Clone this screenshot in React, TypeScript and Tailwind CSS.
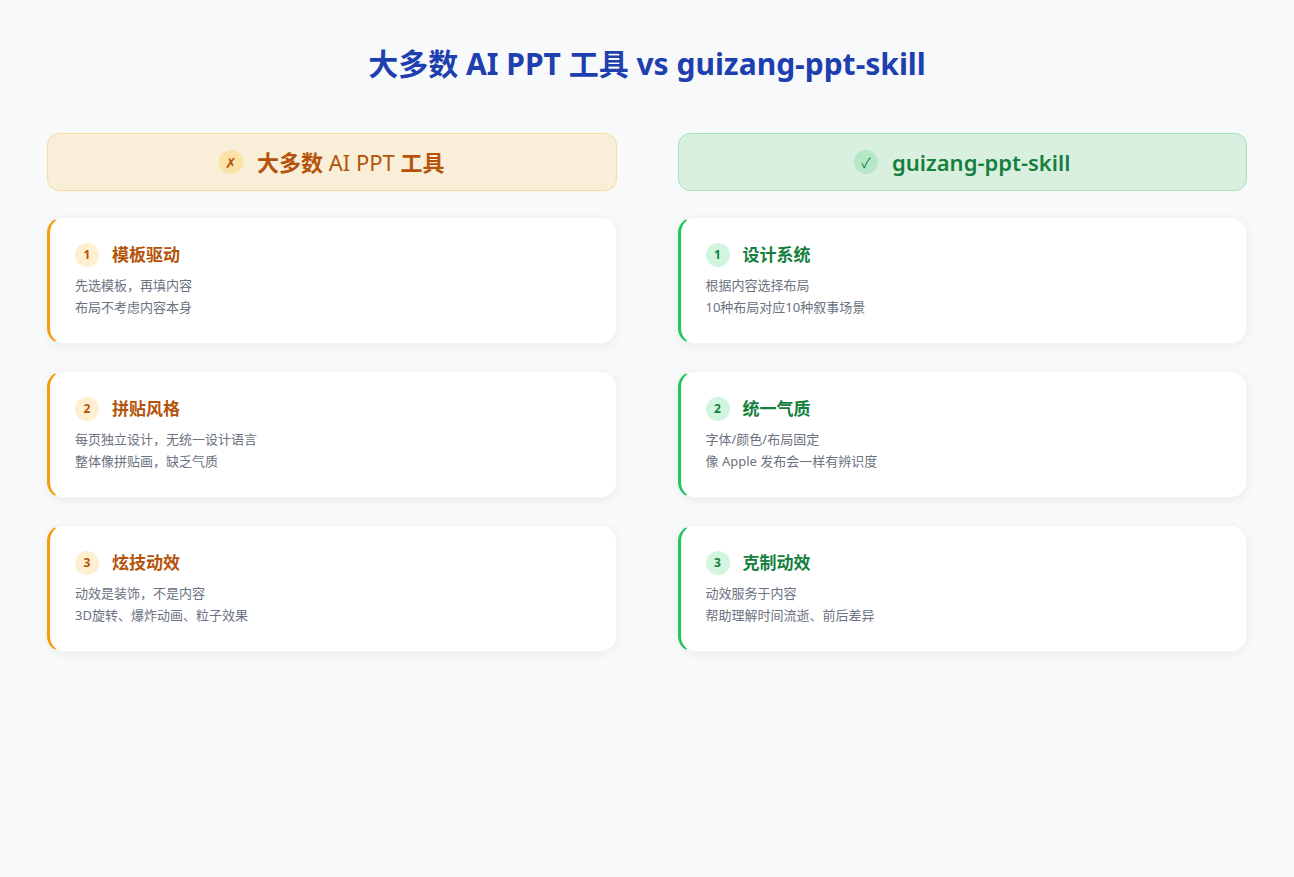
const left = [
  { t: "模板驱动", d: ["先选模板，再填内容", "布局不考虑内容本身"] },
  { t: "拼贴风格", d: ["每页独立设计，无统一设计语言", "整体像拼贴画，缺乏气质"] },
  { t: "炫技动效", d: ["动效是装饰，不是内容", "3D旋转、爆炸动画、粒子效果"] },
];
const right = [
  { t: "设计系统", d: ["根据内容选择布局", "10种布局对应10种叙事场景"] },
  { t: "统一气质", d: ["字体/颜色/布局固定", "像 Apple 发布会一样有辨识度"] },
  { t: "克制动效", d: ["动效服务于内容", "帮助理解时间流逝、前后差异"] },
];

function Card({ i, t, d, good }: { i: number; t: string; d: string[]; good: boolean }) {
  return (
    <div
      className={`h-[127px] rounded-2xl bg-white border border-gray-100 border-l-[3px] shadow-[0_2px_10px_rgba(0,0,0,0.06)] pl-[25px] pt-[24px] ${
        good ? "border-l-[#22c55e]" : "border-l-[#f59e0b]"
      }`}
    >
      <div className="flex items-center gap-[13px]">
        <div
          className={`w-6 h-6 rounded-full flex items-center justify-center text-[12px] font-bold ${
            good ? "bg-[#d1f5de] text-[#15803d]" : "bg-[#fdefd0] text-[#b45309]"
          }`}
        >
          {i}
        </div>
        <div className={`text-[17px] font-bold ${good ? "text-[#15803d]" : "text-[#b45309]"}`}>{t}</div>
      </div>
      <div className="mt-[6px] text-[13px] leading-[22px] text-[#6b7280]">
        {d.map((x) => (
          <div key={x}>{x}</div>
        ))}
      </div>
    </div>
  );
}

export default function App() {
  return (
    <div
      className="min-h-[877px] bg-[#f8f9fb] pt-[42px] px-[47px]"
      style={{ fontFamily: '"Noto Sans", "Noto Sans CJK SC", sans-serif' }}
    >
      <h1 className="text-center text-[30px] font-bold text-[#1e40af] leading-[44px]">
        大多数 AI PPT 工具 vs guizang-ppt-skill
      </h1>
      <div className="grid grid-cols-2 gap-[61px] mt-[47px]">
        <div className="flex flex-col">
          <div className="h-[58px] rounded-xl bg-[#f9efd9] border border-[#f8dc9a] flex items-center justify-center gap-[14px] text-[#b45309] text-[22px]">
            <div className="w-6 h-6 rounded-full bg-[#fbe2a6] flex items-center justify-center text-[14px]">✗</div>
            <div>
              <b>大多数</b> AI PPT <b>工具</b>
            </div>
          </div>
          <div className="flex flex-col gap-[27px] mt-[26px]">
            {left.map((c, k) => (
              <Card key={k} i={k + 1} {...c} good={false} />
            ))}
          </div>
        </div>
        <div className="flex flex-col">
          <div className="h-[58px] rounded-xl bg-[#d9f0e1] border border-[#a6e3bb] flex items-center justify-center gap-[14px] text-[#15803d] text-[22px] font-semibold">
            <div className="w-6 h-6 rounded-full bg-[#b5e8c7] flex items-center justify-center text-[14px] font-normal">✓</div>
            <div>guizang-ppt-skill</div>
          </div>
          <div className="flex flex-col gap-[27px] mt-[26px]">
            {right.map((c, k) => (
              <Card key={k} i={k + 1} {...c} good={true} />
            ))}
          </div>
        </div>
      </div>
    </div>
  );
}
